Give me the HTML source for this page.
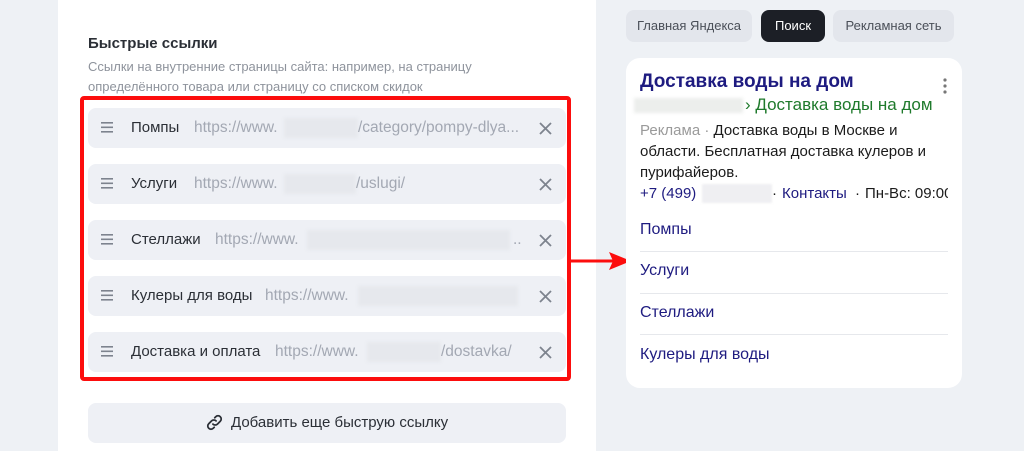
<!DOCTYPE html>
<html><head><meta charset="utf-8"><style>
*{margin:0;padding:0;box-sizing:border-box}
body{width:1024px;height:451px;background:#eef1f5;font-family:"Liberation Sans",sans-serif;position:relative;overflow:hidden}
.a{position:absolute;white-space:nowrap}
.panel{position:absolute;left:58px;top:0;width:538px;height:451px;background:#fff}
.row{position:absolute;left:88px;width:478px;height:40px;background:#eef0f5;border-radius:8px}
.row .h{position:absolute;left:13px;top:14px}
.row .t{position:absolute;left:43px;top:11px;font-size:15px;color:#2b2f36}
.row .u{position:absolute;top:11px;font-size:15.5px;color:#a3a8b3}
.row .b{position:absolute;top:10px;height:20px;background:#e6e8ed;filter:blur(1.5px)}
.row .x{position:absolute;left:451px;top:14px}
.tab{position:absolute;top:10px;height:32px;border-radius:8px;background:#e3e6ec;color:#4a4f58;font-size:13px;line-height:32px;text-align:center}
.card{position:absolute;left:626px;top:58px;width:336px;height:330px;background:#fff;border-radius:14px;overflow:hidden}
.sl{position:absolute;left:14px;font-size:16px;color:#1e1b80}
.ln{position:absolute;left:14px;width:308px;height:1px;background:#e6e8ec}
</style></head><body>
<div class="panel"></div>
<div class="a" style="left:88px;top:35px;font-size:15px;font-weight:bold;color:#2b2f36">Быстрые ссылки</div>
<div class="a" style="left:88px;top:57px;font-size:13px;line-height:20px;color:#8e939c">Ссылки на внутренние страницы сайта: например, на страницу<br>определённого товара или страницу со списком скидок</div>

<svg width="0" height="0" style="position:absolute"><defs>
<g id="hm"><rect x="0" y="0" width="12" height="1.6" fill="#7d838e"/><rect x="0" y="4.5" width="12" height="1.6" fill="#7d838e"/><rect x="0" y="9" width="12" height="1.6" fill="#7d838e"/></g>
<g id="xx"><path d="M1 1L12 12M12 1L1 12" stroke="#7d838e" stroke-width="1.8"/></g>
</defs></svg>

<div class="row" style="top:108px"><svg class="h" width="12" height="11"><use href="#hm"/></svg><span class="t">Помпы</span><span class="u" style="left:106px">https://www.</span><span class="b" style="left:196px;width:74px"></span><span class="u" style="left:270px">/category/pompy-dlya...</span><svg class="x" width="13" height="13"><use href="#xx"/></svg></div>
<div class="row" style="top:164px"><svg class="h" width="12" height="11"><use href="#hm"/></svg><span class="t">Услуги</span><span class="u" style="left:106px">https://www.</span><span class="b" style="left:196px;width:72px"></span><span class="u" style="left:268px">/uslugi/</span><svg class="x" width="13" height="13"><use href="#xx"/></svg></div>
<div class="row" style="top:220px"><svg class="h" width="12" height="11"><use href="#hm"/></svg><span class="t">Стеллажи</span><span class="u" style="left:127px">https://www.</span><span class="b" style="left:219px;width:203px"></span><span class="u" style="left:425px">..</span><svg class="x" width="13" height="13"><use href="#xx"/></svg></div>
<div class="row" style="top:276px"><svg class="h" width="12" height="11"><use href="#hm"/></svg><span class="t">Кулеры для воды</span><span class="u" style="left:177px">https://www.</span><span class="b" style="left:270px;width:160px"></span><svg class="x" width="13" height="13"><use href="#xx"/></svg></div>
<div class="row" style="top:332px"><svg class="h" width="12" height="11"><use href="#hm"/></svg><span class="t">Доставка и оплата</span><span class="u" style="left:187px">https://www.</span><span class="b" style="left:279px;width:74px"></span><span class="u" style="left:353px">/dostavka/</span><svg class="x" width="13" height="13"><use href="#xx"/></svg></div>

<div style="position:absolute;left:80px;top:96px;width:491px;height:285px;border:4px solid #fc0d0d;border-radius:4px"></div>
<svg class="a" style="left:569px;top:248px" width="64" height="26"><path d="M0 13H44" stroke="#fc0d0d" stroke-width="3"/><path d="M40 4L62 13L40 22L44 13Z" fill="#fc0d0d"/></svg>

<div style="position:absolute;left:88px;top:403px;width:478px;height:40px;background:#eef0f5;border-radius:8px"></div>
<svg class="a" style="left:205px;top:413px" width="19" height="19" viewBox="0 0 24 24" fill="none" stroke="#2b2f36" stroke-width="2.2" stroke-linecap="round"><path d="M10 14a4 4 0 0 0 5.7 0l3.6-3.6a4 4 0 0 0-5.7-5.7l-1.3 1.3"/><path d="M14 10a4 4 0 0 0-5.7 0l-3.6 3.6a4 4 0 0 0 5.7 5.7l1.3-1.3"/></svg>
<div class="a" style="left:231px;top:414px;font-size:15px;color:#2b2f36">Добавить еще быструю ссылку</div>

<div class="tab" style="left:626px;width:126px">Главная Яндекса</div>
<div class="tab" style="left:761px;width:64px;background:#1c1f26;color:#fff">Поиск</div>
<div class="tab" style="left:833px;width:121px">Рекламная сеть</div>

<div class="card">
<div class="a" style="left:14px;top:13px;font-size:19px;font-weight:bold;color:#1e1b80">Доставка воды на дом</div>
<svg class="a" style="left:317px;top:20px" width="4" height="16"><circle cx="2" cy="2" r="1.6" fill="#777"/><circle cx="2" cy="8" r="1.6" fill="#777"/><circle cx="2" cy="14" r="1.6" fill="#777"/></svg>
<div class="a" style="left:8px;top:40px;width:109px;height:15px;background:#eceeec;filter:blur(1.5px)"></div>
<div class="a" style="left:119px;top:37px;font-size:17px;color:#1f7a2c">› Доставка воды на дом</div>
<div class="a" style="left:14px;top:62px;font-size:15px;line-height:21px;color:#1b1b1b"><span style="color:#9a9a9a">Реклама · </span>Доставка воды в Москве и<br>области. Бесплатная доставка кулеров и<br>пурифайеров.</div>
<div class="a" style="left:14px;top:127px;font-size:15px;color:#1e1b80">+7 (499)</div>
<div class="a" style="left:76px;top:126px;width:70px;height:19px;background:#efeff2;filter:blur(1px)"></div>
<div class="a" style="left:146px;top:127px;font-size:15px;color:#1b1b1b">·</div>
<div class="a" style="left:156px;top:127px;font-size:15px;color:#1e1b80">Контакты</div>
<div class="a" style="left:229px;top:127px;font-size:15px;color:#1b1b1b">·</div>
<div class="a" style="left:239px;top:127px;font-size:15px;color:#1b1b1b">Пн-Вс: 09:00</div>
<div class="sl" style="top:163px">Помпы</div><div class="ln" style="top:193px"></div>
<div class="sl" style="top:204px">Услуги</div><div class="ln" style="top:235px"></div>
<div class="sl" style="top:246px">Стеллажи</div><div class="ln" style="top:276px"></div>
<div class="sl" style="top:288px">Кулеры для воды</div>
</div>
<div class="a" style="left:948px;top:180px;width:14px;height:20px;background:#fff"></div>
</body></html>
